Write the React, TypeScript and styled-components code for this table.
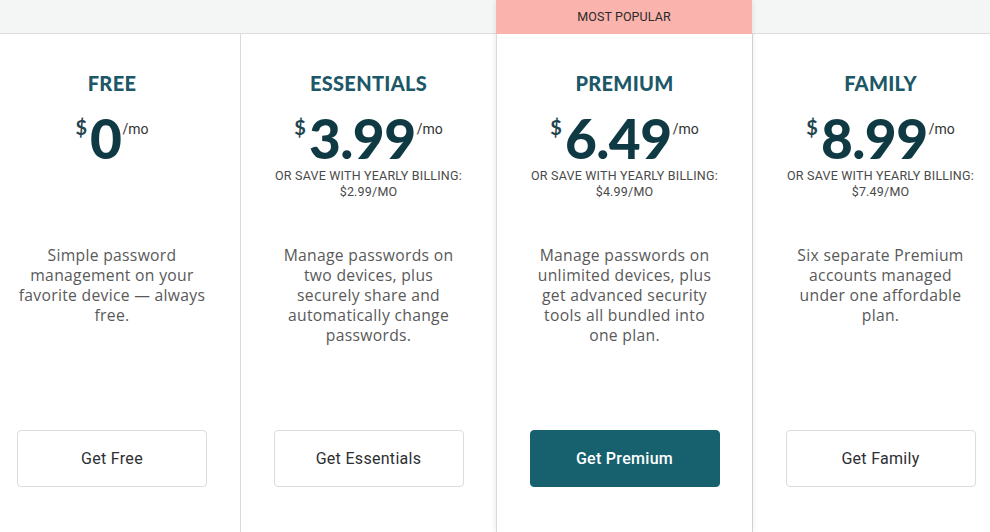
import React from "react";
import styled, { createGlobalStyle } from "styled-components";

const Global = createGlobalStyle`
  html, body { margin: 0; padding: 0; background: #ffffff; }
  body { font-family: "Open Sans", "Liberation Sans", sans-serif; overflow: hidden; }
  * { box-sizing: border-box; }
`;

const Page = styled.div`
  width: 990px;
  height: 532px;
  overflow: hidden;
  background: #ffffff;
`;

const Grid = styled.div`
  display: grid;
  grid-template-columns: repeat(4, 256px);
  margin-left: -16px;
  height: 532px;
`;

const Column = styled.div<{ $featured?: boolean }>`
  display: flex;
  flex-direction: column;
  position: relative;
  z-index: ${(p) => (p.$featured ? 1 : 0)};
  box-shadow: ${(p) => (p.$featured ? "0 0 6px rgba(0,0,0,0.10)" : "none")};
`;

const Strip = styled.div<{ $featured?: boolean }>`
  height: 34px;
  flex: none;
  display: flex;
  align-items: center;
  justify-content: center;
  background: ${(p) => (p.$featured ? "#fab4ad" : "#f4f5f5")};
  border-bottom: 1px solid ${(p) => (p.$featured ? "#fab4ad" : "#dcdddd")};
  font-family: "Roboto", "Liberation Sans", sans-serif;
  font-size: 12.5px;
  color: #2a2a2a;
  letter-spacing: 0.1px;
`;

const Body = styled.div<{ $first?: boolean }>`
  flex: 1;
  display: flex;
  flex-direction: column;
  align-items: center;
  padding: 36px 33px 0;
  border-left: ${(p) => (p.$first ? "none" : "1px solid #dadada")};
  background: #ffffff;
`;

const Title = styled.h2`
  margin: 0;
  font-family: "Lato", "Liberation Sans", sans-serif;
  font-weight: 900;
  font-size: 20px;
  line-height: 26px;
  color: #1c5868;
  letter-spacing: 0.3px;
`;

const PriceRow = styled.div`
  display: flex;
  align-items: flex-start;
  margin-top: 16px;
  height: 52px;
  color: #0f3a44;
  font-family: "Lato", "Liberation Sans", sans-serif;
`;

const Currency = styled.span`
  font-size: 20px;
  font-weight: 700;
  line-height: 21px;
  margin-top: 5px;
  margin-right: 3px;
  color: #244550;
`;

const Amount = styled.span`
  font-size: 55px;
  font-weight: 900;
  line-height: 52px;
  letter-spacing: -0.5px;
`;

const Per = styled.span`
  font-family: "Roboto", "Liberation Sans", sans-serif;
  font-size: 14px;
  line-height: 14px;
  margin-top: 10px;
  margin-left: 1px;
  color: #333;
`;

const Yearly = styled.div`
  margin-top: 4px;
  height: 34px;
  text-align: center;
  font-family: "Roboto", "Liberation Sans", sans-serif;
  font-size: 12.5px;
  line-height: 16px;
  color: #4a4a4a;
  text-transform: uppercase;
  letter-spacing: 0.2px;
  white-space: nowrap;
`;

const Description = styled.p`
  margin: 43px 0 0;
  height: 140px;
  width: 190px;
  text-align: center;
  font-family: "Open Sans", "Liberation Sans", sans-serif;
  font-size: 15.7px;
  line-height: 20px;
  color: #595959;
  letter-spacing: 0.3px;
`;

const Button = styled.button<{ $primary?: boolean }>`
  margin-top: 45px;
  width: 190px;
  height: 57px;
  border-radius: 4px;
  border: 1px solid ${(p) => (p.$primary ? "#17616f" : "#dcdcdc")};
  background: ${(p) => (p.$primary ? "#17616f" : "#ffffff")};
  color: ${(p) => (p.$primary ? "#ffffff" : "#2c2f33")};
  font-family: "Roboto", "Liberation Sans", sans-serif;
  font-weight: ${(p) => (p.$primary ? 500 : 400)};
  font-size: 16px;
  letter-spacing: 0.3px;
  cursor: pointer;
`;

type Plan = {
  name: string;
  price: string;
  yearly?: string;
  desc: string;
  cta: string;
  featured?: boolean;
};

const plans: Plan[] = [
  {
    name: "FREE",
    price: "0",
    desc: "Simple password management on your favorite device — always free.",
    cta: "Get Free",
  },
  {
    name: "ESSENTIALS",
    price: "3.99",
    yearly: "$2.99/MO",
    desc: "Manage passwords on two devices, plus securely share and automatically change passwords.",
    cta: "Get Essentials",
  },
  {
    name: "PREMIUM",
    price: "6.49",
    yearly: "$4.99/MO",
    desc: "Manage passwords on unlimited devices, plus get advanced security tools all bundled into one plan.",
    cta: "Get Premium",
    featured: true,
  },
  {
    name: "FAMILY",
    price: "8.99",
    yearly: "$7.49/MO",
    desc: "Six separate Premium accounts managed under one affordable plan.",
    cta: "Get Family",
  },
];

export default function App() {
  return (
    <Page>
      <Global />
      <Grid>
        {plans.map((p, i) => (
          <Column key={p.name} $featured={p.featured}>
            <Strip $featured={p.featured}>{p.featured ? "MOST POPULAR" : ""}</Strip>
            <Body $first={i === 0}>
              <Title>{p.name}</Title>
              <PriceRow>
                <Currency>$</Currency>
                <Amount>{p.price}</Amount>
                <Per>/mo</Per>
              </PriceRow>
              <Yearly>
                {p.yearly ? (
                  <>
                    Or save with yearly billing:
                    <br />
                    {p.yearly}
                  </>
                ) : null}
              </Yearly>
              <Description>{p.desc}</Description>
              <Button $primary={p.featured}>{p.cta}</Button>
            </Body>
          </Column>
        ))}
      </Grid>
    </Page>
  );
}
